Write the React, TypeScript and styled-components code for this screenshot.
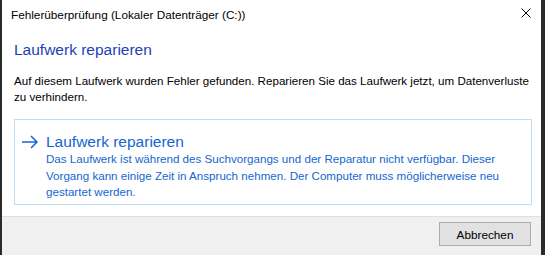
import styled, { createGlobalStyle } from "styled-components";

const GlobalStyle = createGlobalStyle`
  html, body {
    margin: 0;
    padding: 0;
    background: #2b2b2b;
  }
  body {
    font-family: "Liberation Sans", Arial, sans-serif;
  }
`;

const Window = styled.div`
  width: 539px;
  height: 255px;
  margin-left: 2px;
  background: #fff;
  display: flex;
  flex-direction: column;
  overflow: hidden;
`;

const TitleBar = styled.div`
  height: 28px;
  flex-shrink: 0;
  display: flex;
  align-items: center;
  justify-content: space-between;
  padding-left: 9px;
  padding-right: 10px;
`;

const Title = styled.span`
  font-size: 11.75px;
  color: #000;
`;

const CloseIcon = styled.svg`
  width: 10px;
  height: 10px;
  margin-top: -2px;
`;

const Content = styled.div`
  flex: 1;
  min-height: 0;
  padding: 12px 10px 0 12px;
  display: flex;
  flex-direction: column;
`;

const Heading = styled.h1`
  margin: 0;
  font-size: 15.5px;
  font-weight: normal;
  color: #1e3fb4;
  line-height: 20px;
`;

const Message = styled.p`
  margin: 13px 0 0 0;
  font-size: 11.6px;
  line-height: 16px;
  color: #000;
  white-space: nowrap;
`;

const CommandLink = styled.div`
  margin: 14px 0 0 0;
  width: 518px;
  height: 86px;
  flex-shrink: 0;
  border: 1px solid #c4dcf0;
  box-sizing: border-box;
  display: flex;
  padding: 12px 8px 0 6px;
  gap: 7px;
  color: #1466d1;
`;

const Arrow = styled.svg`
  width: 18px;
  height: 14px;
  margin-top: 3px;
  flex-shrink: 0;
`;

const LinkBody = styled.div`
  display: flex;
  flex-direction: column;
`;

const LinkTitle = styled.span`
  font-size: 15.5px;
  line-height: 19px;
`;

const LinkText = styled.span`
  font-size: 11.6px;
  line-height: 16.5px;
  white-space: nowrap;
`;

const Footer = styled.div`
  height: 39px;
  flex-shrink: 0;
  box-sizing: border-box;
  background: #f0f0f0;
  border-top: 1px solid #dfdfdf;
  display: flex;
  justify-content: flex-end;
  padding: 5px 10px 0 0;
`;

const Button = styled.button`
  width: 92px;
  height: 24px;
  background: #e1e1e1;
  border: 1px solid #adadad;
  font-family: "Liberation Sans", Arial, sans-serif;
  font-size: 11.75px;
  color: #000;
  padding: 0;
`;

export default function App() {
  return (
    <>
      <GlobalStyle />
      <Window>
        <TitleBar>
          <Title>Fehlerüberprüfung (Lokaler Datenträger (C:))</Title>
          <CloseIcon viewBox="0 0 10 10">
            <path d="M0.5 0.5 L9.5 9.5 M9.5 0.5 L0.5 9.5" stroke="#000" strokeWidth="1" fill="none" />
          </CloseIcon>
        </TitleBar>
        <Content>
          <Heading>Laufwerk reparieren</Heading>
          <Message>
            Auf diesem Laufwerk wurden Fehler gefunden. Reparieren Sie das Laufwerk jetzt, um Datenverluste
            <br />
            zu verhindern.
          </Message>
          <CommandLink>
            <Arrow viewBox="0 0 18 14">
              <path d="M1 7 H16 M10 1 L16 7 L10 13" stroke="#1466d1" strokeWidth="1.5" fill="none" />
            </Arrow>
            <LinkBody>
              <LinkTitle>Laufwerk reparieren</LinkTitle>
              <LinkText>
                Das Laufwerk ist während des Suchvorgangs und der Reparatur nicht verfügbar. Dieser
                <br />
                Vorgang kann einige Zeit in Anspruch nehmen. Der Computer muss möglicherweise neu
                <br />
                gestartet werden.
              </LinkText>
            </LinkBody>
          </CommandLink>
        </Content>
        <Footer>
          <Button>Abbrechen</Button>
        </Footer>
      </Window>
    </>
  );
}
